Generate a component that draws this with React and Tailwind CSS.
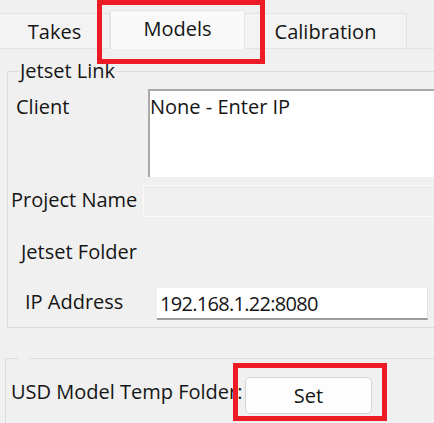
import React from "react";

const font = { fontFamily: '"Open Sans", "Noto Sans", sans-serif' };

export default function App() {
  return (
    <div
      className="relative w-[434px] h-[423px] overflow-hidden bg-[#f0f0f0] text-[20px] leading-[27px] text-[#151515]"
      style={font}
    >
      {/* tabs */}
      <div className="flex h-[49px] items-end border-b border-[#e3e3e3]">
        <div className="flex h-[35px] w-[110px] shrink-0 items-center justify-center border-t border-r border-[#e2e2e2] bg-[#f3f3f3]">
          Takes
        </div>
        <div className="-mb-px flex h-[39px] w-[135px] shrink-0 items-center justify-center border-x border-t border-[#e5e5e5] bg-[#f9f9f9] pb-[3px]">
          Models
        </div>
        <div className="flex h-[35px] w-[162px] shrink-0 items-center justify-center border-t border-r border-[#e2e2e2] bg-[#f3f3f3]">
          Calibration
        </div>
      </div>

      {/* Jetset Link group */}
      <fieldset className="mt-[9px] ml-[7px] w-[460px] border border-[#dcdcdc] px-0 pt-0 pb-[7px]">
        <legend className="ml-[11px] px-[1px] leading-[26px]">Jetset Link</legend>

        <div className="mt-[5px] flex">
          <div className="w-[140px] shrink-0 pl-[8px] pt-[4px]">Client</div>
          <div className="h-[88px] flex-1 border-t-2 border-l-2 border-[#a9a9a9] bg-white leading-[27px]">
            <div className="pt-[2px]">None - Enter IP</div>
          </div>
        </div>

        <div className="mt-[8px] flex">
          <div className="w-[135px] shrink-0 whitespace-nowrap pl-[3px] pt-[1px]">Project Name</div>
          <div className="h-[32px] flex-1 border border-[#fafafa] bg-[#efefef]" />
        </div>

        <div className="mt-[21px] pl-[13px]">Jetset Folder</div>

        <div className="mt-[23px] flex">
          <div className="w-[149px] shrink-0 pl-[17px]">IP Address</div>
          <div className="flex h-[32px] w-[271px] items-center border-r border-b-2 border-r-[#e3e3e3] border-b-[#9c9c9c] bg-white pl-[3px] tracking-[-0.7px]">
            192.168.1.22:8080
          </div>
        </div>
      </fieldset>

      {/* USD group */}
      <fieldset className="mt-[30px] ml-[5px] w-[460px] border border-[#dcdcdc] px-0 pt-0 pb-[20px]">
        <legend className="ml-[12px] h-0 w-[11px] p-0" />
        <div className="mt-[18px] flex items-start">
          <div className="w-[239px] shrink-0 whitespace-nowrap pl-[5px] pt-[1px]">USD Model Temp Folder:</div>
          <button className="flex h-[37px] w-[127px] items-center justify-center rounded-[5px] border border-[#d3d3d3] bg-[#fdfdfd]">
            Set
          </button>
        </div>
      </fieldset>

      {/* red highlight boxes */}
      <div className="pointer-events-none absolute left-[97px] top-0 h-[64px] w-[168px] border-[5px] border-[#ed1c24]" />
      <div className="pointer-events-none absolute left-[233px] top-[363px] h-[58px] w-[154px] border-[5px] border-[#ed1c24]" />
    </div>
  );
}
